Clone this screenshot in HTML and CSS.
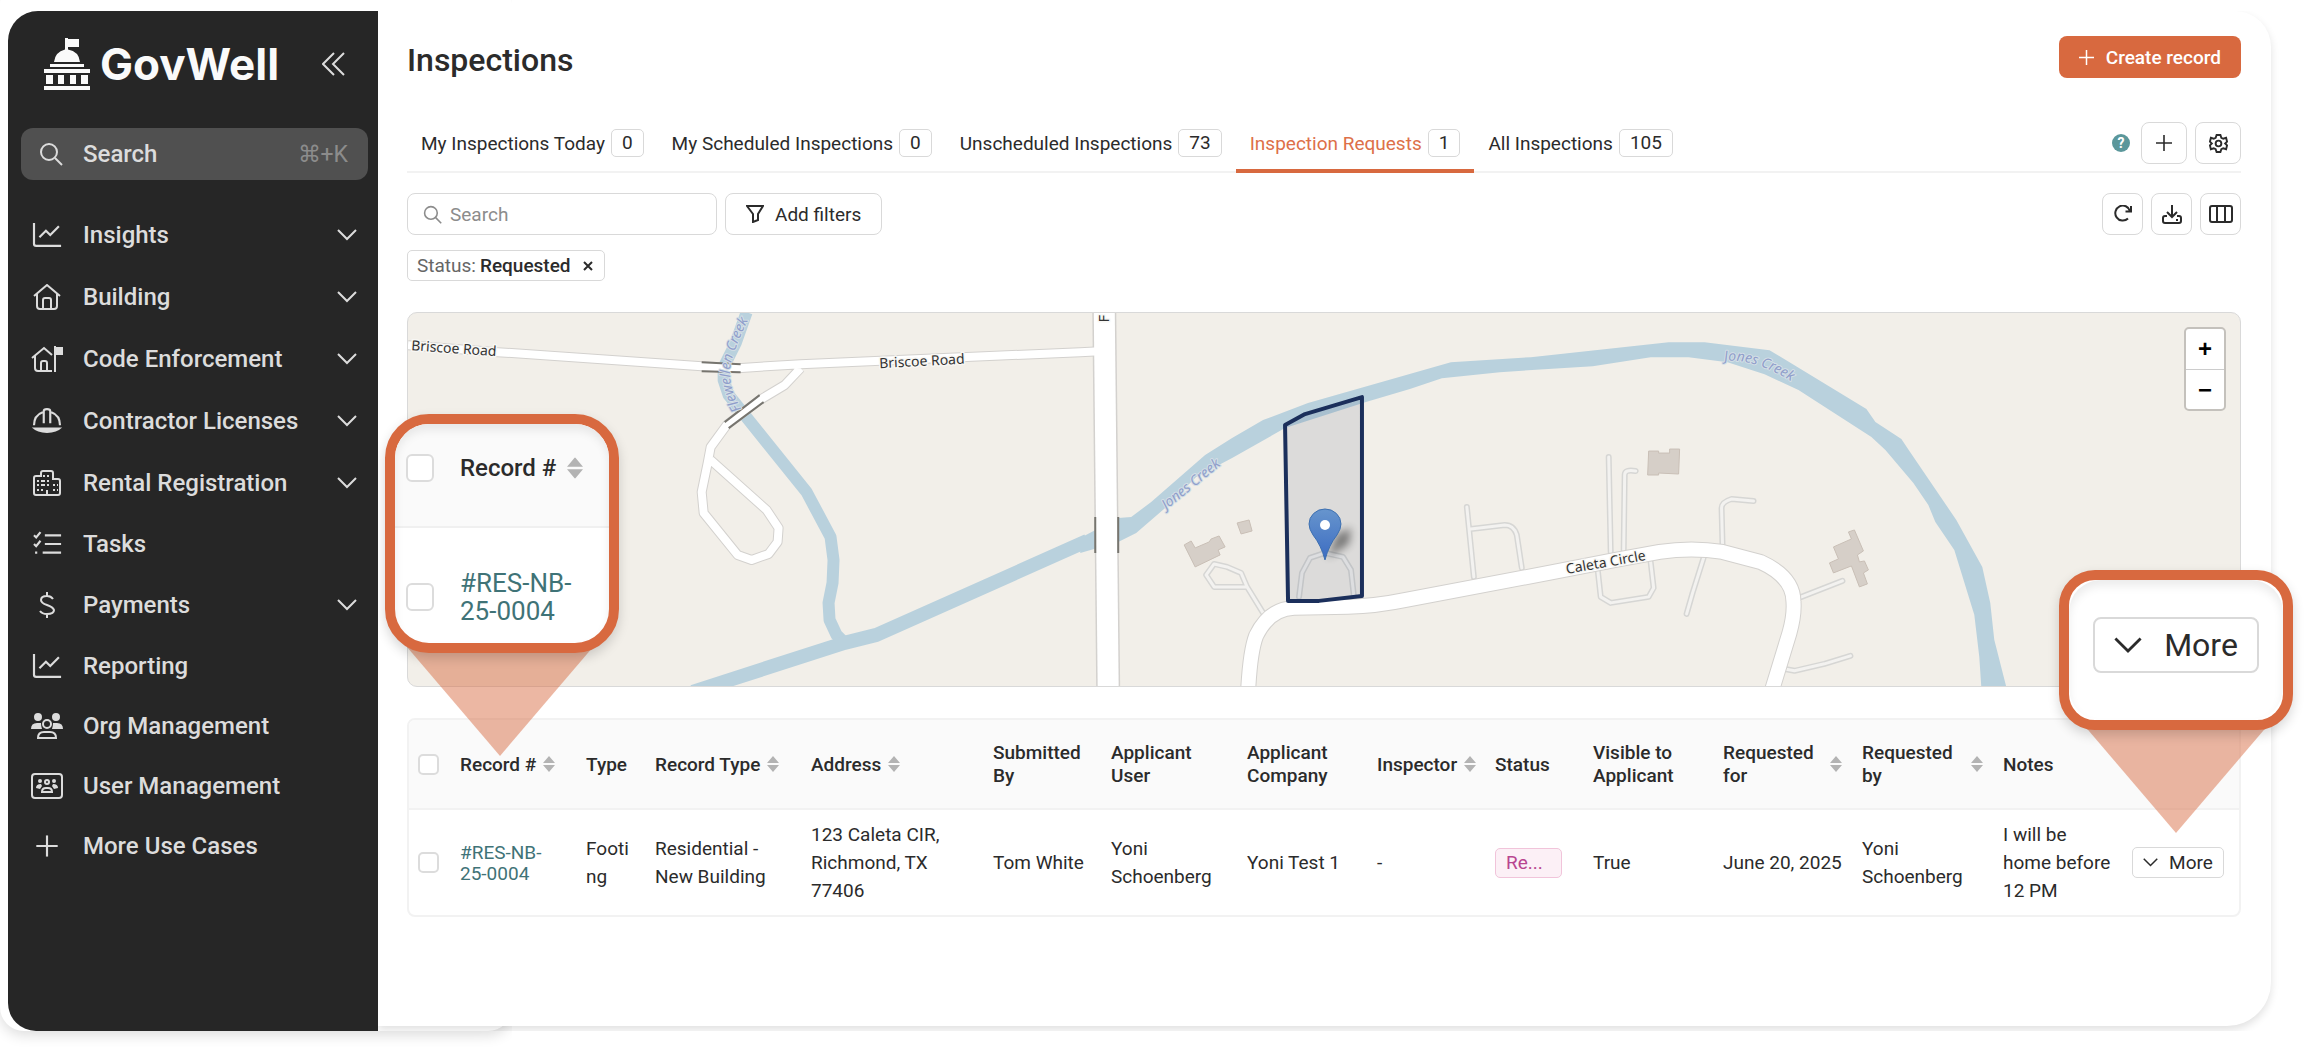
FILE: index.html
```html
<!DOCTYPE html>
<html lang="en">
<head>
<meta charset="utf-8">
<meta name="viewport" content="width=device-width, initial-scale=1">
<title>Inspections - GovWell</title>
<link rel="stylesheet" href="styles.css">
</head>
<body>
<svg class="sprite" aria-hidden="true">
  <symbol id="chevron" viewBox="0 0 20 12"><path d="M1 1l9 9 9-9"/></symbol>
  <symbol id="chart" viewBox="0 0 28 24"><path d="M2 1v19q0 2 2 2h23M7 14l6-6 4 4 8-8"/></symbol>
  <symbol id="plus" viewBox="0 0 20 20"><path d="M10 0v20M0 10h20"/></symbol>
  <symbol id="search" viewBox="0 0 24 24"><circle cx="10" cy="10" r="8"/><path d="M16 16l7 7"/></symbol>
  <symbol id="sort" viewBox="0 0 12 16"><path d="M6 0l6 7H0zM6 16L0 9h12z"/></symbol>
</svg>
<div class="backdrop"></div>
<div class="app">
  <aside class="sidebar">
    <div class="brand">
      <svg class="brand-mark" viewBox="0 0 46 52" aria-hidden="true">
        <path d="M21 0h3v1h11v8H24v2.500q11 2 12 12.500H10q1-10 11-12.500zM6 26h34v3H6zM0 31h46v4H0zM2 37h7v9H2zM14 37h6v9h-6zM26 37h6v9h-6zM37 37h7v9h-7zM0 48h46v4H0z"/>
      </svg>
      <span class="brand-name">GovWell</span>
      <button class="collapse" type="button" aria-label="Collapse sidebar"><svg viewBox="0 0 24 24"><path d="M12 1L1 12l11 11M22 1L11 12l11 11"/></svg></button>
    </div>
    <label class="side-search">
      <svg viewBox="0 0 24 24" aria-hidden="true"><use href="#search"/></svg>
      <input type="search" placeholder="Search" aria-label="Search">
      <kbd>⌘+K</kbd>
    </label>
    <nav class="nav">
      <a class="expands" href="#"><svg class="ico" viewBox="0 0 28 24"><use href="#chart"/></svg><span>Insights</span><svg class="chev" viewBox="0 0 20 12"><use href="#chevron"/></svg></a>
      <a class="expands" href="#"><svg class="ico" viewBox="0 0 28 26"><path d="M1 12L14 1l13 11M4 10v12q0 3 3 3h14q3 0 3-3V10M10 25v-9q0-2 2-2h4q2 0 2 2v9"/></svg><span>Building</span><svg class="chev" viewBox="0 0 20 12"><use href="#chevron"/></svg></a>
      <a class="expands" href="#"><svg class="ico" viewBox="0 0 32 26"><path d="M1 12L13 2l8 7M4 10v12q0 3 3 3h14M10 25v-8q0-2 2-2h2q2 0 2 2v8M24 0v26"/><path class="solid" d="M24 1h8v8h-8z"/></svg><span>Code Enforcement</span><svg class="chev" viewBox="0 0 20 12"><use href="#chevron"/></svg></a>
      <a class="expands" href="#"><svg class="ico" viewBox="0 0 28 24"><path d="M2 16q0-9 8-12M26 16q0-9-8-12M11 14V3q0-2 3-2t3 2v11"/><path class="solid" d="M0 18h28q-5 5-14 5T0 18z"/></svg><span>Contractor Licenses</span><svg class="chev" viewBox="0 0 20 12"><use href="#chevron"/></svg></a>
      <a class="expands" href="#"><svg class="ico" viewBox="0 0 28 26"><path d="M8 6V3q0-2 2-2h8q2 0 2 2v6h5q2 0 2 2v12q0 2-2 2H3q-2 0-2-2V8q0-2 2-2z"/><path class="dots" d="M4 11h6M4 15h6M4 20h6M10 6h8M10 11h8M10 15h8M20 15h5M20 20h5"/><path d="M14 25v-5"/></svg><span>Rental Registration</span><svg class="chev" viewBox="0 0 20 12"><use href="#chevron"/></svg></a>
      <a href="#"><svg class="ico" viewBox="0 0 28 24"><path d="M2 4l2 2 4-5M2 12l2 2 4-5M12 4h15M12 12h15M10 20h17M3 20h2"/></svg><span>Tasks</span></a>
      <a class="expands" href="#"><svg class="ico" viewBox="0 0 28 26"><path d="M14 0v4M14 22v4M20 7q-2-3-6-3-6 0-6 4 0 3 6 5t7 5q0 4-7 4-5 0-7-3"/></svg><span>Payments</span><svg class="chev" viewBox="0 0 20 12"><use href="#chevron"/></svg></a>
      <a href="#"><svg class="ico" viewBox="0 0 28 24"><use href="#chart"/></svg><span>Reporting</span></a>
      <a href="#"><svg class="ico" viewBox="0 0 32 26"><path class="solid" d="M7 0a4 4 0 110 8 4 4 0 010-8zM25 0a4 4 0 110 8 4 4 0 010-8zM0 16q0-6 6-6h4q0 3 1 6zM32 16q0-6-6-6h-4q0 3-1 6z"/><circle cx="16" cy="11" r="4"/><path d="M7 25q0-6 6-6h6q6 0 6 6z"/></svg><span>Org Management</span></a>
      <a href="#"><svg class="ico" viewBox="0 0 32 26"><rect x="1" y="1" width="30" height="24" rx="3"/><path class="solid" d="M9 6a2 2 0 110 4 2 2 0 010-4zM23 6a2 2 0 110 4 2 2 0 010-4zM5 15q0-4 5-4l1 2-2 3zM27 15q0-4-5-4l-1 2 2 3z"/><circle cx="16" cy="9" r="2"/><path d="M11 19q0-4 4-4h2q4 0 4 4z"/></svg><span>User Management</span></a>
      <a href="#"><svg class="ico" viewBox="-4 -2 28 24"><use href="#plus" width="20" height="20"/></svg><span>More Use Cases</span></a>
    </nav>
  </aside>

  <main class="main">
    <header class="head">
      <h1>Inspections</h1>
      <button class="create" type="button"><svg viewBox="0 0 20 20" aria-hidden="true"><use href="#plus"/></svg>Create record</button>
    </header>

    <div class="tabs-bar">
      <nav class="tabs">
        <a href="#">My Inspections Today <span class="count">0</span></a>
        <a href="#">My Scheduled Inspections <span class="count">0</span></a>
        <a href="#">Unscheduled Inspections <span class="count">73</span></a>
        <a href="#" class="active" aria-current="page">Inspection Requests <span class="count">1</span></a>
        <a href="#">All Inspections <span class="count">105</span></a>
      </nav>
      <div class="tab-tools">
        <span class="help">?</span>
        <button class="btn" type="button" aria-label="Add view"><svg width="16" height="16" viewBox="0 0 20 20"><use href="#plus"/></svg></button>
        <button class="btn" type="button" aria-label="View settings"><svg width="19" height="19" viewBox="0 0 20 20"><path d="M8 1h4l1 3 2 1 3-1 1 4-2 2 2 2-1 4-3-1-2 1-1 3H8l-1-3-2-1-3 1-1-4 2-2-2-2 1-4 3 1 2-1z"/><circle cx="10" cy="10" r="3"/></svg></button>
      </div>
    </div>

    <div class="toolbar">
      <label class="search"><svg viewBox="0 0 24 24" aria-hidden="true"><use href="#search"/></svg><input type="search" placeholder="Search" aria-label="Search inspections"></label>
      <button class="btn filters" type="button"><svg width="18" height="18" viewBox="0 0 18 18" aria-hidden="true"><path d="M1 1h16l-5 8v6l-5 2V9z"/></svg>Add filters</button>
      <div class="table-tools">
        <button class="btn" type="button" aria-label="Refresh"><svg width="18" height="18" viewBox="0 0 18 18"><path d="M14 13.500A7.500 7.500 0 1 1 16 6M17 1v5.500h-5.500"/></svg></button>
        <button class="btn" type="button" aria-label="Download"><svg width="20" height="20" viewBox="0 0 20 20"><path d="M10 1v11M5 8l5 5 5-5M5 12H3q-2 0-2 2v3q0 2 2 2h14q2 0 2-2v-3q0-2-2-2h-2M14 16h2"/></svg></button>
        <button class="btn" type="button" aria-label="Columns"><svg width="24" height="18" viewBox="0 0 24 18"><path d="M3 1h18q2 0 2 2v12q0 2-2 2H3q-2 0-2-2V3q0-2 2-2zM8 1v16M16 1v16"/></svg></button>
      </div>
    </div>

    <div class="chips">
      <span class="chip"><span class="chip-key">Status:</span> <b>Requested</b><button type="button" aria-label="Remove filter"><svg width="10" height="10" viewBox="0 0 10 10"><path d="M1 1l8 8M9 1L1 9"/></svg></button></span>
    </div>

    <section class="map" aria-label="Map">
      <svg class="map-art" viewBox="0 0 1834 375" preserveAspectRatio="xMidYMid slice">
        <defs>
          <path id="p-flew" d="M334 97Q317 70 325 45T345 0"/>
          <path id="p-jones1" d="M759 198L830 140"/>
          <path id="p-jones2" d="M1318 49Q1350 45 1395 76"/>
          <linearGradient id="pin" x1="0" y1="0" x2="0" y2="1"><stop offset="0" stop-color="#6795cd"/><stop offset="1" stop-color="#3c6cc2"/></linearGradient>
          <filter id="soft" x="-50%" y="-50%" width="200%" height="200%"><feGaussianBlur stdDeviation="4"/></filter>
        </defs>
        <g class="water">
          <path class="stream" d="M339 0L328 31 316 55V68L321 83 337 103 399 180 423 225 426 248 425 271 421 291 422 308 429 323 437 331"/>
          <path class="river" d="M285 380L437 331 469 323 680 229"/>
          <path d="M673 226L711 206 724 205 744 190 798 143 825 126 856 108 901 91 1044 50 1124 45 1262 30H1298L1363 38 1460 97 1469 110 1495 127 1501 136 1550 208 1576 255 1584 291 1588 328 1600 375H1575L1573 345 1568 303 1548 238 1529 210 1522 193 1507 171 1479 138 1465 125 1392 78 1358 62 1321 50 1282 45H1244L1186 54 1093 60 1035 66 1003 77 959 90 878 116 825 146 789 165 758 196 729 221 711 230 673 241z"/>
        </g>
        <g class="buildings">
          <path d="M777 233L784 229 788 236 802 230 804 227 812 224 818 235 811 238 813 243 788 255z"/>
          <path d="M830 211L842 208 845 219 834 222z"/>
          <path d="M1242 139H1252V141H1263V137H1273L1272 162 1252 161V163H1241z"/>
          <path d="M1442 220L1448 218 1457 239 1451 243 1453 250 1458 249 1462 258 1457 261 1461 272 1453 275 1445 254 1427 261 1423 251 1432 247 1427 235 1445 227z"/>
        </g>
        <g class="drive-edge">
          <path id="d" d="M856 301L840 275 834 261 820 255 807 252 799 263 807 275H840M892 285L895 261 903 246 918 241 936 245 944 258 947 285M1060 195L1067 265M1064 217L1098 213Q1107 213 1110 223L1115 256M1202 145L1204 240M1229 159Q1218 157 1218 163L1217 238M1347 189L1325 187Q1315 190 1315 196L1316 235M1191 258L1194 285 1204 291 1242 285 1247 276 1244 250M1297 246L1286 281 1280 302M1395 285L1436 269M1377 357L1388 359 1418 352 1444 344"/>
        </g>
        <use href="#d" class="drive"/>
        <g class="road-edge">
          <path class="w8" d="M0 33L90 40 294 54 330 56 393 52 673 40 692 39M393 56L377 73 352 88 319 113 303 135 300 151 294 180 296 201 330 243 344 248 361 242 370 230 371 216 359 198 303 148"/>
          <path class="w14" d="M841 380Q843 340 849 324 862 297 887 296L941 295Q970 294 999 288L1142 261 1209 248 1253 240Q1285 235 1316 240L1354 250Q1387 265 1387 290 1388 303 1383 321L1365 380"/>
          <path class="w22" d="M697-4L701 380"/>
        </g>
        <g class="road">
          <path class="w8" d="M0 33L90 40 294 54 330 56 393 52 673 40 692 39M393 56L377 73 352 88 319 113 303 135 300 151 294 180 296 201 330 243 344 248 361 242 370 230 371 216 359 198 303 148"/>
          <path class="w14" d="M841 380Q843 340 849 324 862 297 887 296L941 295Q970 294 999 288L1142 261 1209 248 1253 240Q1285 235 1316 240L1354 250Q1387 265 1387 290 1388 303 1383 321L1365 380"/>
          <path class="w22" d="M697-4L701 380"/>
        </g>
        <path class="bridge" d="M294 50L333 52M294 59L333 60M352 83L317 110M356 90L321 116M688 205V241M711 205V241"/>
        <g class="map-label">
          <text x="3" y="38" transform="rotate(4 3 38)">Briscoe Road</text>
          <text x="472" y="56" transform="rotate(-3 472 56)">Briscoe Road</text>
          <text x="1160" y="262" transform="rotate(-10 1160 262)">Caleta Circle</text>
          <text x="702" y="10" transform="rotate(-90 702 10)">F</text>
        </g>
        <g class="water-label">
          <text><textPath href="#p-flew">Flewellen Creek</textPath></text>
          <text><textPath href="#p-jones1">Jones Creek</textPath></text>
          <text><textPath href="#p-jones2">Jones Creek</textPath></text>
        </g>
        <path class="parcel" d="M878 113L898 102 955 85V284L912 289H881z"/>
        <path d="M920 246L930 222 944 216 942 232z" opacity=".45" filter="url(#soft)"/>
        <path class="pin" d="M918 248Q914 233 906 223 902 217 902 212A16 15 0 0 1 934 212Q934 217 930 223 922 233 918 248z"/>
        <circle cx="918" cy="213" r="5" fill="#fff"/>
      </svg>
      <div class="zoom"><button type="button" aria-label="Zoom in">+</button><button type="button" aria-label="Zoom out">−</button></div>
    </section>

    <div class="table-wrap">
      <table>
        <colgroup><col class="c41"><col class="c126"><col class="c69"><col class="c156"><col class="c182"><col class="c118"><col class="c136"><col class="c130"><col class="c118"><col class="c98"><col class="c130"><col class="c139"><col class="c141"><col class="c129"><col class="c121"></colgroup>
        <thead>
          <tr>
            <th class="pick"><input type="checkbox" aria-label="Select all"></th>
            <th><span class="sortable">Record # <svg class="sort" viewBox="0 0 12 16"><use href="#sort"/></svg></span></th>
            <th>Type</th>
            <th><span class="sortable">Record Type <svg class="sort" viewBox="0 0 12 16"><use href="#sort"/></svg></span></th>
            <th><span class="sortable">Address <svg class="sort" viewBox="0 0 12 16"><use href="#sort"/></svg></span></th>
            <th>Submitted By</th>
            <th>Applicant User</th>
            <th>Applicant Company</th>
            <th><span class="sortable">Inspector <svg class="sort" viewBox="0 0 12 16"><use href="#sort"/></svg></span></th>
            <th>Status</th>
            <th>Visible to Applicant</th>
            <th><span class="sortable spread"><span>Requested for</span> <svg class="sort" viewBox="0 0 12 16"><use href="#sort"/></svg></span></th>
            <th><span class="sortable spread"><span>Requested by</span> <svg class="sort" viewBox="0 0 12 16"><use href="#sort"/></svg></span></th>
            <th>Notes</th>
            <th></th>
          </tr>
        </thead>
        <tbody>
          <tr>
            <td class="pick"><input type="checkbox" aria-label="Select #RES-NB-25-0004"></td>
            <td><a class="record" href="#">#RES-NB-25-0004</a></td>
            <td>Footing</td>
            <td>Residential - New Building</td>
            <td>123 Caleta CIR, Richmond, TX 77406</td>
            <td>Tom White</td>
            <td>Yoni Schoenberg</td>
            <td>Yoni Test 1</td>
            <td>-</td>
            <td><span class="tag">Re...</span></td>
            <td>True</td>
            <td class="date">June 20, 2025</td>
            <td>Yoni Schoenberg</td>
            <td>I will be home before 12 PM</td>
            <td><button class="btn more" type="button"><svg viewBox="0 0 20 12" aria-hidden="true"><use href="#chevron"/></svg>More</button></td>
          </tr>
        </tbody>
      </table>
    </div>

    <div class="callout callout-record">
      <div class="frame">
        <div class="zoom-head"><input type="checkbox" aria-label="Select all, enlarged"><span>Record #</span><svg class="sort" viewBox="0 0 12 16"><use href="#sort"/></svg></div>
        <div class="zoom-row"><input type="checkbox" aria-label="Select record, enlarged"><a class="record" href="#">#RES-NB-25-0004</a></div>
      </div>
    </div>
    <div class="callout callout-more">
      <div class="frame"><button class="btn" type="button"><svg viewBox="0 0 20 12" aria-hidden="true"><use href="#chevron"/></svg>More</button></div>
    </div>
  </main>
</div>
</body>
</html>
```
FILE: styles.css
```css
* { box-sizing: border-box; }
body {
  margin: 0;
  background: #fff;
  color: #2b2b2b;
  font-family: Roboto, "Liberation Sans", sans-serif;
  font-size: 19px;
  overflow-x: hidden;
}
a { color: inherit; text-decoration: none; }
button, input { font: inherit; color: inherit; }
svg { fill: none; stroke: currentColor; stroke-width: 2; flex: none; }
.solid { fill: currentColor; stroke: none; }
.sprite { position: absolute; width: 0; height: 0; }

.backdrop {
  position: absolute;
  z-index: -1;
  top: -20px;
  bottom: 19px;
  left: 0;
  width: 512px;
  border-radius: 24px;
  box-shadow: 0 4px 14px rgba(0, 0, 0, .14);
  clip-path: inset(0 0 -19px 0);
}
.app {
  display: flex;
  min-height: calc(100vh - 30px);
  margin: 11px 39px 19px 8px;
}

/* Sidebar */
.sidebar {
  flex: none;
  width: 370px;
  padding: 0 10px 0 13px;
  background: #262626;
  color: #dcdcdc;
  border-radius: 30px 0 0 28px;
}
.brand {
  display: flex;
  align-items: center;
  height: 106px;
  padding: 0 22px 0 23px;
}
.brand-mark { width: 46px; height: 52px; fill: #fafafa; stroke: none; }
.brand-name {
  margin-left: 10px;
  color: #fafafa;
  font: 700 44px/48px Inter, "Liberation Sans", sans-serif;
}
.collapse {
  display: flex;
  margin-left: auto;
  padding: 0;
  border: 0;
  background: none;
}
.collapse svg { width: 24px; height: 24px; }
.side-search {
  display: flex;
  align-items: center;
  height: 52px;
  margin: 11px 0 24px;
  padding: 0 20px 0 18px;
  border-radius: 12px;
  background: #505050;
  font-size: 24px;
}
.side-search svg { width: 24px; height: 24px; }
.side-search input {
  flex: 1;
  min-width: 0;
  margin-left: 20px;
  padding: 0;
  border: 0;
  background: none;
  font-weight: 500;
}
.side-search input::placeholder { color: #dcdcdc; opacity: 1; }
.side-search kbd { color: #8c8c8c; font: inherit; font-size: 23px; }
.nav a {
  display: flex;
  align-items: center;
  height: 60px;
  padding: 0 11px 0 10px;
  font-size: 24px;
  font-weight: 500;
}
.nav .expands { height: 62px; }
.ico { width: 32px; height: 26px; margin-right: 20px; }
.dots { stroke-width: 2; stroke-dasharray: 2 2; }
.chev { width: 20px; height: 12px; margin-left: auto; }

/* Main area */
.main {
  position: relative;
  flex: 1;
  min-width: 0;
  margin-bottom: 5px;
  padding: 25px 30px 40px 29px;
  background: #fff;
  border-radius: 0 36px 44px 0;
  box-shadow: 0 4px 8px rgba(0, 0, 0, .12);
  clip-path: inset(0 -40px -5px 0);
}
.head { display: flex; justify-content: space-between; align-items: flex-start; }
h1 { margin: 0; font-size: 32px; line-height: 48px; font-weight: 500; }
.create {
  display: flex;
  align-items: center;
  gap: 12px;
  height: 42px;
  padding: 0 20px;
  border: 0;
  border-radius: 8px;
  background: #d8693f;
  color: #fff;
  font-weight: 500;
}
.create svg { width: 15px; height: 15px; }
.tabs-bar {
  display: flex;
  justify-content: space-between;
  height: 60px;
  margin-top: 29px;
  border-bottom: 2px solid #f2f2f2;
}
.tabs { display: flex; height: 60px; }
.tabs a {
  display: flex;
  align-items: center;
  gap: 6px;
  padding: 0 14px;
  border-top: 4px solid transparent;
  border-bottom: 4px solid transparent;
}
.tabs .active { color: #dd7049; border-bottom-color: #d8693f; }
.count {
  padding: 0 10px;
  border: 1px solid #d9d9d9;
  border-radius: 5px;
  color: #2b2b2b;
  line-height: 26px;
}
.tab-tools { display: flex; align-items: center; gap: 8px; height: 60px; }
.help {
  width: 18px;
  margin-right: 3px;
  border-radius: 9px;
  background: #5b979b;
  color: #fff;
  font-size: 14px;
  font-weight: 700;
  line-height: 18px;
  text-align: center;
}
.btn {
  display: flex;
  align-items: center;
  justify-content: center;
  height: 42px;
  padding: 0;
  border: 1px solid #d9d9d9;
  border-radius: 8px;
  background: #fff;
}
.tab-tools .btn { width: 46px; }
.table-tools { display: flex; gap: 8px; margin-left: auto; }
.table-tools .btn { width: 41px; }
.toolbar { display: flex; gap: 8px; margin-top: 20px; }
.search {
  display: flex;
  align-items: center;
  gap: 8px;
  width: 310px;
  height: 42px;
  padding: 0 15px;
  border: 1px solid #d9d9d9;
  border-radius: 8px;
  color: #8c8c8c;
}
.search svg { width: 19px; height: 19px; }
.search input { width: 100%; padding: 0; border: 0; background: none; }
.search input::placeholder { color: #8c8c8c; opacity: 1; }
input { outline-offset: 2px; }
.filters { gap: 11px; padding: 0 20px; }
.chips { display: flex; margin-top: 15px; }
.chip {
  display: flex;
  align-items: center;
  gap: 4px;
  height: 31px;
  padding: 0 9px;
  border: 1px solid #d9d9d9;
  border-radius: 5px;
}
.chip-key { color: #666; }
.chip b { font-weight: 500; }
.chip button { display: flex; margin-left: 6px; padding: 2px; border: 0; background: none; }

/* Map */
.map {
  position: relative;
  height: 375px;
  margin-top: 31px;
  border: 1px solid #d9d9d9;
  border-radius: 10px;
  background: #f2efe9;
  overflow: hidden;
}
.map-art { display: block; width: 100%; height: 100%; stroke: none; }
.water { fill: #b9d1dd; stroke: none; }
.stream, .river { fill: none; stroke: #b9d1dd; stroke-width: 12; stroke-linejoin: round; }
.river { stroke-width: 14; }
.buildings { fill: #d6cfc8; stroke: #c9bfb6; stroke-width: 1; }
.drive-edge { stroke: #d6d6d4; stroke-width: 6; stroke-linecap: round; stroke-linejoin: round; }
.drive-edge path { stroke: inherit; }
.drive { stroke: #f3f2f0; stroke-width: 3; stroke-linecap: round; stroke-linejoin: round; }
.drive-edge + .drive { stroke: #f3f2f0; }
.road { stroke: #fff; stroke-linejoin: round; }
.road .w8 { stroke-width: 8; }
.road .w14 { stroke-width: 14; }
.road .w22 { stroke-width: 21; }
.road-edge { stroke: #d3d1ce; stroke-linejoin: round; }
.road-edge .w8 { stroke-width: 10; }
.road-edge .w14 { stroke-width: 16; }
.road-edge .w22 { stroke-width: 24; }
.bridge { stroke: #77756f; stroke-width: 2; }
.map-label, .water-label {
  font-family: "Noto Sans", "Open Sans", sans-serif;
  font-size: 14px;
  stroke: #f8f7f4;
  stroke-width: 3;
  stroke-linejoin: round;
  paint-order: stroke;
  fill: #333;
}
.water-label { fill: #8f9ecb; stroke: #d5dfe6; stroke-width: 2; font-style: italic; }
.parcel { fill: rgba(27, 47, 91, .1); stroke: #1b2f5b; stroke-width: 4; stroke-linejoin: round; }
.pin { fill: url(#pin); stroke: #3d6fb0; stroke-width: 1; }
.map-art > path[filter] { fill: #000; }
.zoom {
  position: absolute;
  top: 14px;
  right: 14px;
  border: 2px solid #c4c1bc;
  border-radius: 5px;
  background: #fff;
}
.zoom button {
  display: block;
  width: 38px;
  height: 40px;
  padding: 0;
  border: 0;
  background: none;
  color: #000;
  font: 700 24px/38px "Liberation Sans", sans-serif;
}
.zoom button + button { border-top: 1px solid #ccc; }

/* Table */
.table-wrap {
  margin-top: 31px;
  border: 2px solid #f2f2f2;
  border-radius: 8px;
  overflow: hidden;
}
table { width: 100%; border-collapse: collapse; table-layout: fixed; }
.c41 { width: 39px; } .c126 { width: 126px; } .c69 { width: 69px; }
.c156 { width: 156px; } .c182 { width: 182px; } .c118 { width: 118px; }
.c136 { width: 136px; } .c130 { width: 130px; } .c98 { width: 98px; }
.c139 { width: 139px; } .c141 { width: 141px; } .c129 { width: 129px; }
.c121 { width: 119px; }
th, td { padding: 0 8px 0 12px; text-align: left; font-weight: 400; }
th { height: 89px; line-height: 23px; background: #fafafa; border-bottom: 2px solid #f2f2f2; font-weight: 500; }
td { height: 106px; line-height: 28px; overflow-wrap: anywhere; }
.pick { padding: 0 0 0 9px; }
.sortable { display: flex; align-items: center; gap: 7px; white-space: nowrap; }
.spread { justify-content: space-between; white-space: normal; }
.sort { width: 12px; height: 16px; fill: #b3b3b3; stroke: none; }
input[type="checkbox"] {
  display: block;
  flex: none;
  width: 21px;
  height: 21px;
  margin: 0;
  border: 2px solid #dcdcdc;
  border-radius: 5px;
  background: #fff;
  appearance: none;
}
.record { display: block; width: 90px; color: #3f7377; line-height: 21px; }
.date { white-space: nowrap; }
.tag {
  display: block;
  width: 67px;
  padding: 0 10px;
  border: 1px solid #f1c4da;
  border-radius: 5px;
  background: #fcf0f6;
  color: #b84590;
}
.more { width: 92px; height: 31px; gap: 11px; border-radius: 5px; line-height: 28px; }
.more svg { width: 15px; height: 9px; }

/* Enlarged callouts */
.callout { position: absolute; }
.callout::before {
  content: "";
  position: absolute;
  top: calc(100% - 6px);
  height: 109px;
  width: 186px;
  background: rgba(216, 105, 63, .48);
  clip-path: polygon(0 0, 100% 0, 50% 100%);
}
.frame {
  position: relative;
  height: 100%;
  border: 10px solid #d8693f;
  background: #fff;
  box-shadow: 0 5px 12px rgba(0, 0, 0, .16);
  overflow: hidden;
}
.frame::after {
  content: "";
  position: absolute;
  inset: 0;
  border-radius: 32px;
  box-shadow: inset 0 6px 10px rgba(0, 0, 0, .08);
  pointer-events: none;
}
.callout-record { left: 7px; top: 403px; width: 234px; height: 239px; }
.callout-record::before { left: 22px; }
.callout-record .frame { border-radius: 44px; }
.zoom-head, .zoom-row { display: flex; align-items: center; padding-left: 11px; font-size: 24px; }
.zoom-head { height: 104px; padding-bottom: 14px; border-bottom: 2px solid #f0f0f0; background: #fafafa; font-weight: 500; }
.zoom-row { height: 115px; padding-top: 23px; }
.callout input[type="checkbox"] { width: 28px; height: 28px; margin-right: 26px; border-radius: 6px; }
.zoom-head .sort { width: 16px; height: 22px; margin-left: 11px; }
.zoom-row .record { width: 120px; font-size: 26px; line-height: 28px; }
.callout-more { right: -22px; top: 559px; width: 234px; height: 160px; }
.callout-more::before { left: 24px; }
.callout-more .frame { display: flex; align-items: center; justify-content: center; padding-bottom: 10px; border-radius: 36px; }
.callout-more .btn { width: 166px; height: 56px; gap: 22px; border-width: 2px; font-size: 32px; }
.callout-more svg { width: 28px; height: 17px; }
```
